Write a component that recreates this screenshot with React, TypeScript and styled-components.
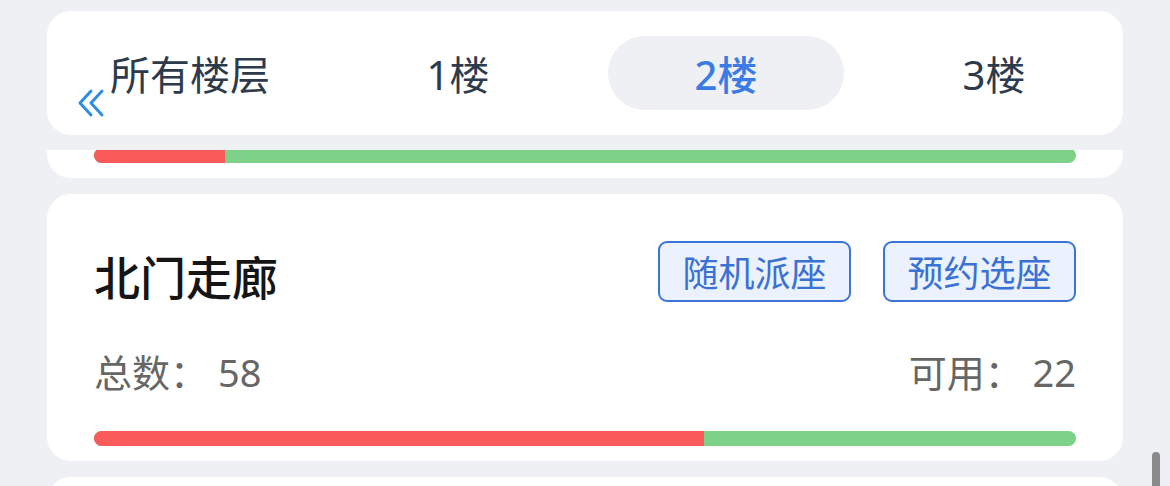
import styled, { createGlobalStyle } from "styled-components";

const GlobalStyle = createGlobalStyle`
  html, body {
    margin: 0;
    padding: 0;
    background: #eff0f4;
    font-family: "Noto Sans", "Noto Sans CJK SC", sans-serif;
    overflow: hidden;
  }
`;

const Page = styled.div`
  position: relative;
  width: 1170px;
  height: 486px;
  display: flex;
  flex-direction: column;
  overflow: hidden;
`;

const Header = styled.div`
  padding: 11px 47px 15px;
  background: #eff0f4;
  position: relative;
  z-index: 2;
`;

const TabCard = styled.div`
  position: relative;
  height: 124px;
  background: #fff;
  border-radius: 24px;
  display: flex;
  align-items: center;
  padding-left: 9px;
  overflow: hidden;
`;

const Tab = styled.div<{ $active?: boolean }>`
  flex: 0 0 268px;
  height: 74px;
  box-sizing: border-box;
  display: flex;
  align-items: center;
  justify-content: center;
  font-size: 40px;
  color: ${(p) => (p.$active ? "#3b7be6" : "#2c3a4b")};
  font-weight: ${(p) => (p.$active ? 500 : 400)};
  position: relative;
  &::before {
    content: "";
    display: ${(p) => (p.$active ? "block" : "none")};
    position: absolute;
    inset: 0 16px;
    background: #eff0f4;
    border-radius: 37px;
    z-index: 0;
  }
  span {
    position: relative;
    z-index: 1;
  }
`;

const BackIcon = styled.svg`
  position: absolute;
  left: 30px;
  top: 77px;
`;

const Viewport = styled.div`
  flex: 1;
  overflow: hidden;
  padding: 0 47px;
`;

const List = styled.div<{ $offset: number }>`
  margin-top: ${(p) => -p.$offset}px;
  display: flex;
  flex-direction: column;
  gap: 16px;
`;

const Card = styled.div`
  background: #fff;
  border-radius: 24px;
  padding: 47px 47px 15px;
  height: 267px;
  box-sizing: border-box;
  display: flex;
  flex-direction: column;
`;

const TopRow = styled.div`
  height: 61px;
  display: flex;
  align-items: center;
  justify-content: space-between;
`;

const Title = styled.div`
  font-size: 46px;
  font-weight: 500;
  color: #151515;
  padding-top: 6px;
`;

const Actions = styled.div`
  display: flex;
  gap: 32px;
`;

const ActionButton = styled.button`
  height: 61px;
  width: 193px;
  box-sizing: border-box;
  border: 2.5px solid #3c74d6;
  border-radius: 9px;
  background: #ebf2fd;
  color: #3a71d4;
  font-family: inherit;
  font-size: 36px;
  padding: 0;
  display: flex;
  align-items: center;
  justify-content: center;
`;

const StatRow = styled.div`
  margin-top: 43px;
  height: 50px;
  display: flex;
  align-items: center;
  justify-content: space-between;
  font-size: 38px;
  color: #666;
`;

const Bar = styled.div`
  margin-top: 36px;
  height: 15px;
  border-radius: 8px;
  background: #7ed189;
  overflow: hidden;
  display: flex;
`;

const Used = styled.div`
  background: #fa5a5a;
  height: 100%;
`;

const ScrollThumb = styled.div`
  position: absolute;
  right: 10px;
  top: 452px;
  width: 8px;
  height: 60px;
  border-radius: 4px;
  background: #8a8a8a;
`;

type Area = { name: string; total: number; free: number };

const areas: Area[] = [
  { name: "南门大厅", total: 60, free: 52 },
  { name: "北门走廊", total: 58, free: 22 },
  { name: "东侧阅览区", total: 40, free: 18 },
];

const tabs = ["所有楼层", "1楼", "2楼", "3楼"];

const App = () => {
  return (
    <Page>
      <GlobalStyle />
      <Header>
        <TabCard>
          {tabs.map((t) => (
            <Tab key={t} $active={t === "2楼"}>
              <span>{t}</span>
            </Tab>
          ))}
          <BackIcon width="28" height="30" viewBox="0 0 28 30">
            <path
              d="M14 3 L3 15 L14 27 M25 3 L14 15 L25 27"
              fill="none"
              stroke="#2d8ce6"
              strokeWidth="3"
              strokeLinecap="round"
              strokeLinejoin="round"
            />
          </BackIcon>
        </TabCard>
      </Header>
      <Viewport>
        <List $offset={239}>
          {areas.map((a) => (
            <Card key={a.name}>
              <TopRow>
                <Title>{a.name}</Title>
                <Actions>
                  <ActionButton>随机派座</ActionButton>
                  <ActionButton>预约选座</ActionButton>
                </Actions>
              </TopRow>
              <StatRow>
                <span>总数：&nbsp;{a.total}</span>
                <span>可用：&nbsp;{a.free}</span>
              </StatRow>
              <Bar>
                <Used
                  style={{ width: `${((a.total - a.free) / a.total) * 100}%` }}
                />
              </Bar>
            </Card>
          ))}
        </List>
      </Viewport>
      <ScrollThumb />
    </Page>
  );
};

export default App;
